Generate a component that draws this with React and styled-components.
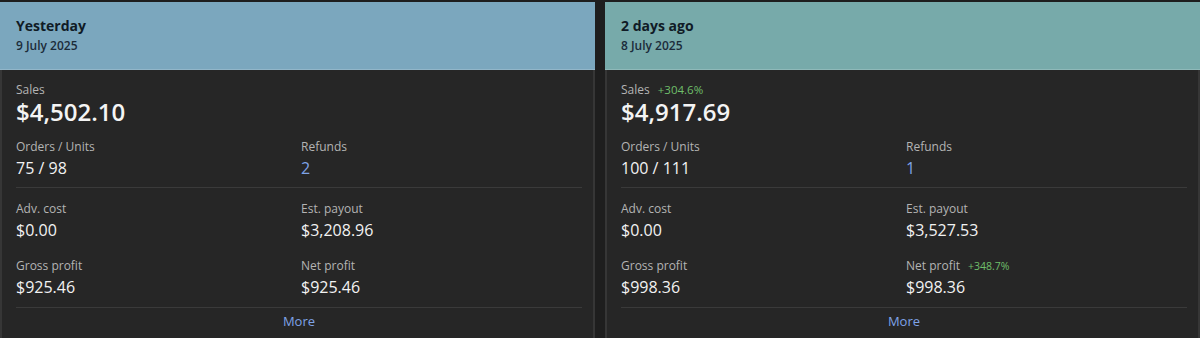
import React from "react";
import styled, { createGlobalStyle } from "styled-components";

const GlobalStyle = createGlobalStyle`
  html, body {
    margin: 0;
    padding: 0;
    background: #1e1e1e;
  }
  body {
    font-family: "Open Sans", "Liberation Sans", sans-serif;
    -webkit-font-smoothing: antialiased;
  }
`;

const days = [
  {
    title: "Yesterday",
    date: "9 July 2025",
    tone: "#7ba7be",
    sales: "$4,502.10",
    orders: "75 / 98",
    refunds: "2",
    adv: "$0.00",
    payout: "$3,208.96",
    gross: "$925.46",
    net: "$925.46",
  },
  {
    title: "2 days ago",
    date: "8 July 2025",
    tone: "#77aaaa",
    sales: "$4,917.69",
    salesChange: "+304.6%",
    orders: "100 / 111",
    refunds: "1",
    adv: "$0.00",
    payout: "$3,527.53",
    gross: "$998.36",
    net: "$998.36",
    netChange: "+348.7%",
  },
];

const Page = styled.div`
  display: grid;
  grid-template-columns: 595px 595px;
  column-gap: 10px;
  padding-top: 2px;
  height: 336px;
  overflow: hidden;
`;

const Card = styled.section`
  display: flex;
  flex-direction: column;
  background: #262626;
  border-left: 2px solid #363636;
  border-right: 2px solid #363636;
`;

const Header = styled.header`
  background: ${(p) => p.$tone};
  margin: 0 -2px;
  padding: 15px 16px 15px;
  border-bottom: 1px solid rgba(255, 255, 255, 0.18);
`;

const Title = styled.div`
  font-size: 14px;
  line-height: 18px;
  font-weight: 700;
  color: #101b26;
`;

const DateLine = styled.div`
  margin-top: 3px;
  font-size: 12px;
  line-height: 16px;
  font-weight: 600;
  color: #1b2c3a;
`;

const Body = styled.div`
  padding: 12px 11px 0 14px;
`;

const Label = styled.div`
  font-size: 12px;
  line-height: 14px;
  color: #b4b4b4;
  display: flex;
  align-items: baseline;
`;

const SalesLabel = styled(Label)`
  line-height: 16px;
`;

const Change = styled.span`
  margin-left: 8px;
  font-size: ${(p) => p.$size}px;
  line-height: 14px;
  color: #6fbf6a;
`;

const BigValue = styled.div`
  font-size: 24px;
  line-height: 28px;
  font-weight: 600;
  color: #f4f4f4;
`;

const Section = styled.div`
  display: grid;
  grid-template-columns: 285px 1fr;
  row-gap: 19px;
  padding: ${(p) => p.$pad};
  border-bottom: 1px solid #3a3a3a;
`;

const Stat = styled.div`
  display: flex;
  flex-direction: column;
  gap: 4px;
`;

const Value = styled.div`
  font-size: 16px;
  line-height: 20px;
  color: ${(p) => (p.$link ? "#7fa3e6" : "#f2f2f2")};
`;

const More = styled.div`
  padding-top: 4px;
  text-align: center;
  font-size: 13px;
  line-height: 18px;
  color: #7fa3e6;
`;

const Item = ({ label, value, change, link }) => (
  <Stat>
    <Label>
      {label}
      {change && <Change $size={10.5}>{change}</Change>}
    </Label>
    <Value $link={link}>{value}</Value>
  </Stat>
);

const DayCard = ({ day }) => (
  <Card>
    <Header $tone={day.tone}>
      <Title>{day.title}</Title>
      <DateLine>{day.date}</DateLine>
    </Header>
    <Body>
      <SalesLabel>
        Sales
        {day.salesChange && <Change $size={11.5}>{day.salesChange}</Change>}
      </SalesLabel>
      <BigValue>{day.sales}</BigValue>

      <Section $pad="14px 0 9px">
        <Item label="Orders / Units" value={day.orders} />
        <Item label="Refunds" value={day.refunds} link />
      </Section>

      <Section $pad="14px 0 10px">
        <Item label="Adv. cost" value={day.adv} />
        <Item label="Est. payout" value={day.payout} />
        <Item label="Gross profit" value={day.gross} />
        <Item label="Net profit" value={day.net} change={day.netChange} />
      </Section>

      <More>More</More>
    </Body>
  </Card>
);

export default function App() {
  return (
    <>
      <GlobalStyle />
      <Page>
        {days.map((d) => (
          <DayCard key={d.title} day={d} />
        ))}
      </Page>
    </>
  );
}
